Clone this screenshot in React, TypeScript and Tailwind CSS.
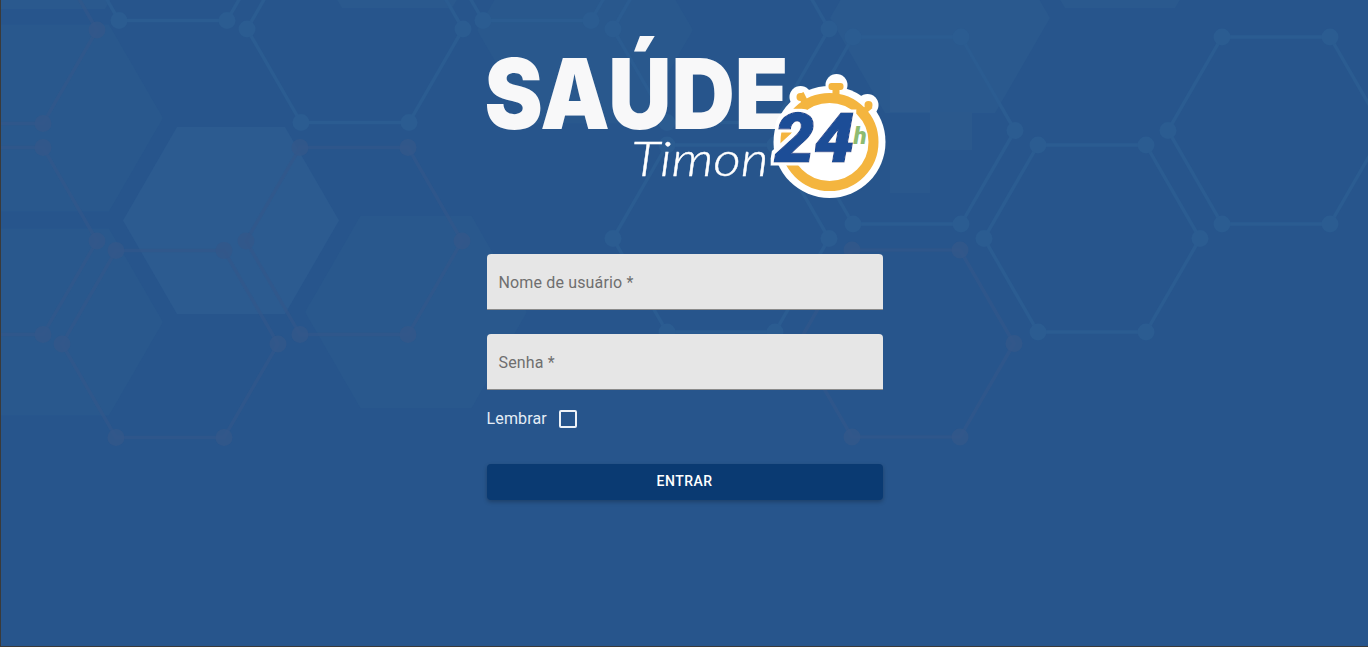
const FILLS: [number, number, number, string][] = [
  [231, 220.5, 108, "#2c5b90"],
  [55, 118, 108, "#29588d"],
  [55, 322, 108, "#29588d"],
  [416, 312, 111, "#29588d"],
  [940, 18, 110, "#2a598e"],
  [397, -87, 110, "#2a598e"],
  [1120, -87, 110, "#2a598e"],
  [50, -86, 110, "#2a598e"],
  [585, 30, 108, "#29588d"],
];

const LIGHT_HEXES: [number, number][] = [
  [173, -73],
  [355, 29],
  [537, -73],
  [721, 29],
  [721, 238.5],
  [907, 130.5],
  [1092, 238.5],
  [1276, 130.5],
];

const DARK_HEXES: [number, number][] = [
  [-11, 30],
  [-11, 241],
  [354, 241],
  [170, 344],
  [906, 343.5],
];

function hexVertices(cx: number, cy: number, r = 108) {
  const h = r * 0.866;
  return [
    [cx - r / 2, cy - h],
    [cx + r / 2, cy - h],
    [cx + r, cy],
    [cx + r / 2, cy + h],
    [cx - r / 2, cy + h],
    [cx - r, cy],
  ];
}

function toPoints(vertices: number[][]) {
  return vertices.map((v) => v.join(",")).join(" ");
}

function HexBackground() {
  return (
    <svg
      aria-hidden="true"
      viewBox="0 0 1367 646"
      className="absolute inset-0 h-[646px] w-[1367px]"
    >
      <g transform="translate(-1 0)">
        {FILLS.map(([cx, cy, r, color]) => (
          <polygon key={`${cx}-${cy}`} points={toPoints(hexVertices(cx, cy, r))} fill={color} />
        ))}
        <rect x="890" y="70" width="40" height="42" fill="#2e5b8f" />
        <rect x="930" y="112" width="42" height="38" fill="#2b598d" />
        <rect x="890" y="150" width="40" height="43" fill="#2a588d" />
        {LIGHT_HEXES.map(([cx, cy]) => {
          const vertices = hexVertices(cx, cy);
          return (
            <g key={`${cx}-${cy}`} fill="#2b5c91" stroke="#2b5c91">
              <polygon points={toPoints(vertices)} fill="none" strokeWidth="3.5" />
              {vertices.map(([x, y]) => (
                <circle key={`${x}-${y}`} cx={x} cy={y} r="8.5" stroke="none" />
              ))}
            </g>
          );
        })}
        {DARK_HEXES.map(([cx, cy]) => {
          const vertices = hexVertices(cx, cy);
          return (
            <g key={`${cx}-${cy}`} fill="#33588a" stroke="#33588a">
              <polygon points={toPoints(vertices)} fill="none" strokeWidth="3.5" opacity="0.65" />
              {vertices.map(([x, y]) => (
                <circle key={`${x}-${y}`} cx={x} cy={y} r="8.5" stroke="none" opacity="0.8" />
              ))}
            </g>
          );
        })}
      </g>
    </svg>
  );
}

function Logo() {
  return (
    <svg viewBox="474.5 25 420 190" className="h-[190px] w-[420px] shrink-0" role="img" aria-label="Saúde Timon 24h">
      <defs>
        <filter id="halo" x="-20%" y="-20%" width="140%" height="140%">
          <feMorphology in="SourceAlpha" operator="dilate" radius="3" result="grown" />
          <feFlood floodColor="#ffffff" />
          <feComposite in2="grown" operator="in" result="outline" />
          <feMerge>
            <feMergeNode in="outline" />
            <feMergeNode in="SourceGraphic" />
          </feMerge>
        </filter>
      </defs>
      <text
        x="484"
        y="129"
        textLength="304"
        lengthAdjust="spacingAndGlyphs"
        fill="#f8f8f9"
        className="font-['Inter','sans-serif'] text-[98px] font-black"
      >
        SAÚDE
      </text>
      <text
        x="631"
        y="176"
        textLength="137"
        lengthAdjust="spacingAndGlyphs"
        fill="#ffffff"
        stroke="#ffffff"
        strokeWidth="0.4"
        className="font-['Lato','sans-serif'] text-[48px] font-light italic"
      >
        Timon
      </text>
      {/* stopwatch */}
      <g>
        <circle cx="829" cy="142" r="56" fill="#ffffff" />
        <circle cx="836" cy="85" r="11" fill="#ffffff" />
        <circle cx="800" cy="97" r="11" fill="#ffffff" />
        <circle cx="867" cy="105" r="11" fill="#ffffff" />
        <rect x="832" y="87" width="7" height="10" fill="#f4b53f" />
        <rect x="828" y="83" width="15" height="7" rx="3" fill="#f4b53f" />
        <path d="M797 95 L803 92 L809 104 L803 107 Z" fill="#f4b53f" />
        <circle cx="800" cy="97" r="4" fill="#f4b53f" />
        <path d="M862 109 L868 103 L872 108 L865 114 Z" fill="#f4b53f" />
        <circle cx="868" cy="105" r="4" fill="#f4b53f" />
        <circle cx="829" cy="142" r="44" fill="none" stroke="#f4b53f" strokeWidth="10" />
      </g>
      <text
        x="774"
        y="162"
        textLength="80"
        lengthAdjust="spacingAndGlyphs"
        fill="#1f4e97"
        stroke="#1f4e97"
        strokeWidth="1.2"
        filter="url(#halo)"
        className="font-['Roboto','sans-serif'] text-[68px] font-black italic"
      >
        24
      </text>
      <text
        x="853"
        y="144"
        fill="#8dbb70"
        className="font-['Roboto','sans-serif'] text-[24px] font-black italic"
      >
        h
      </text>
    </svg>
  );
}

function Field({ label }: { label: string }) {
  return (
    <div className="flex h-14 items-center rounded-t border-b border-[#8b8b8b] bg-[#e6e6e6] px-3 pt-[3px] text-base tracking-[0.15px] text-[#6f6f6f]">
      {label} *
    </div>
  );
}

export default function App() {
  return (
    <div className="relative h-[647px] w-full overflow-hidden border-b border-l border-[#3a3a3a] bg-[#27558c] font-['Roboto','sans-serif']">
      <HexBackground />
      <main className="relative flex flex-col items-center pt-[25px]">
        <Logo />
        <form className="mt-[39px] flex w-[396px] flex-col">
          <Field label="Nome de usuário" />
          <div className="mt-6">
            <Field label="Senha" />
          </div>
          <label className="mt-[19px] flex h-[20px] items-center gap-3 text-base tracking-[0.15px] text-[#e4edf6]">
            Lembrar
            <span className="size-[18px] rounded-[2px] border-2 border-[#eef2f7]" />
          </label>
          <button
            type="button"
            className="mt-[35px] h-9 rounded bg-[#0a3a72] pb-[2px] text-sm font-medium tracking-[0.45px] text-white shadow-[0_2px_4px_rgba(0,0,0,0.25)]"
          >
            ENTRAR
          </button>
        </form>
      </main>
    </div>
  );
}
